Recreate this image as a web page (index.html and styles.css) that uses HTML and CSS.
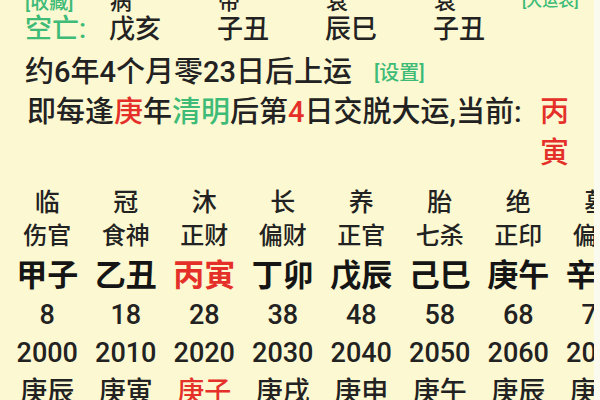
FILE: index.html
```html
<!DOCTYPE html>
<html lang="zh-CN">
<head>
<meta charset="utf-8">
<title>大运</title>
<link rel="stylesheet" href="styles.css">
</head>
<body>
<div class="page">
  <div class="pillars top">
    <div class="lbl"><span class="g fav">[收藏]</span></div>
    <div class="cell">病</div>
    <div class="cell">帝</div>
    <div class="cell">衰</div>
    <div class="cell">衰</div>
    <div class="extra"><span class="g tiny">[大运表]</span></div>
  </div>
  <div class="pillars kong">
    <div class="lbl g">空亡:</div>
    <div class="cell">戊亥</div>
    <div class="cell">子丑</div>
    <div class="cell">辰巳</div>
    <div class="cell">子丑</div>
  </div>
  <div class="line start">约6年4个月零23日后上运<span class="g set">[设置]</span></div>
  <div class="jiao">
    <div class="jtext">即每逢<span class="r">庚</span>年<span class="g">清明</span>后第<span class="r">4</span>日交脱大运,当前:</div>
    <div class="cur r"><span>丙</span><span>寅</span></div>
  </div>
  <div class="yun">
    <div class="c sheng">临</div><div class="c sheng">冠</div><div class="c sheng">沐</div><div class="c sheng">长</div><div class="c sheng">养</div><div class="c sheng">胎</div><div class="c sheng">绝</div><div class="c sheng">墓</div>
    <div class="c shen">伤官</div><div class="c shen">食神</div><div class="c shen">正财</div><div class="c shen">偏财</div><div class="c shen">正官</div><div class="c shen">七杀</div><div class="c shen">正印</div><div class="c shen">偏印</div>
    <div class="c gz">甲子</div><div class="c gz">乙丑</div><div class="c gz now">丙寅</div><div class="c gz">丁卯</div><div class="c gz">戊辰</div><div class="c gz">己巳</div><div class="c gz">庚午</div><div class="c gz">辛未</div>
    <div class="c num">8</div><div class="c num">18</div><div class="c num">28</div><div class="c num">38</div><div class="c num">48</div><div class="c num">58</div><div class="c num">68</div><div class="c num">78</div>
    <div class="c num">2000</div><div class="c num">2010</div><div class="c num">2020</div><div class="c num">2030</div><div class="c num">2040</div><div class="c num">2050</div><div class="c num">2060</div><div class="c num">2070</div>
    <div class="c ln">庚辰</div><div class="c ln">庚寅</div><div class="c ln now">庚子</div><div class="c ln">庚戌</div><div class="c ln">庚申</div><div class="c ln">庚午</div><div class="c ln">庚辰</div><div class="c ln">庚寅</div>
  </div>
</div>
</body>
</html>
```

FILE: styles.css
```css
html, body {
  margin: 0;
  padding: 0;
  width: 600px;
  height: 400px;
  overflow: hidden;
  background: #fbfaee;
}

body {
  font-family: Roboto, "Noto Sans CJK SC", sans-serif;
  color: #222;
  font-weight: 500;
}

.page {
  width: 594px;
  height: 411px;
  margin-top: -11px;
  background: #fcf8d1;
  overflow: hidden;
}

.g { color: #3dbb77; }
.r { color: #e5302a; }

.pillars {
  display: grid;
  grid-template-columns: 81px repeat(4, 108px) 1fr;
  align-items: center;
}

.pillars .lbl {
  padding-left: 25px;
  white-space: nowrap;
}

.pillars .cell {
  text-align: center;
}

.top {
  height: 24px;
  font-size: 22px;
  line-height: 24px;
}

.top .cell {
  padding-right: 28px;
}

.fav {
  font-size: 19px;
}

.extra {
  padding-left: 9px;
}

.tiny {
  font-size: 16px;
  vertical-align: 4px;
}

.kong {
  height: 32px;
  font-size: 26px;
  line-height: 32px;
}

.kong .lbl {
  font-size: 27px;
}

.line {
  padding-left: 25px;
  white-space: nowrap;
}

.start {
  margin-top: 2px;
  font-size: 29px;
  line-height: 50px;
  height: 50px;
}

.set {
  font-size: 20px;
  margin-left: 22px;
  vertical-align: 2px;
}

.jiao {
  display: flex;
  font-size: 29px;
  line-height: 30px;
}

.jtext {
  flex: 0 0 540px;
  box-sizing: border-box;
  padding-left: 27px;
  white-space: nowrap;
}

.cur {
  display: flex;
  flex-direction: column;
  gap: 11px;
}

.yun {
  margin-top: 16px;
  padding-left: 8px;
  display: grid;
  grid-template-columns: repeat(8, 78.5px);
  grid-template-rows: 32px 34px 44px 42px 34px 38px;
}

.c {
  display: flex;
  align-items: center;
  justify-content: center;
  white-space: nowrap;
}

.sheng { font-size: 25px; }
.shen { font-size: 24px; }
.gz { font-size: 31px; font-weight: 700; color: #151515; }
.num { font-size: 27px; font-weight: 500; }
.ln { font-size: 27px; }
.yun .now { color: #e5302a; }
```
